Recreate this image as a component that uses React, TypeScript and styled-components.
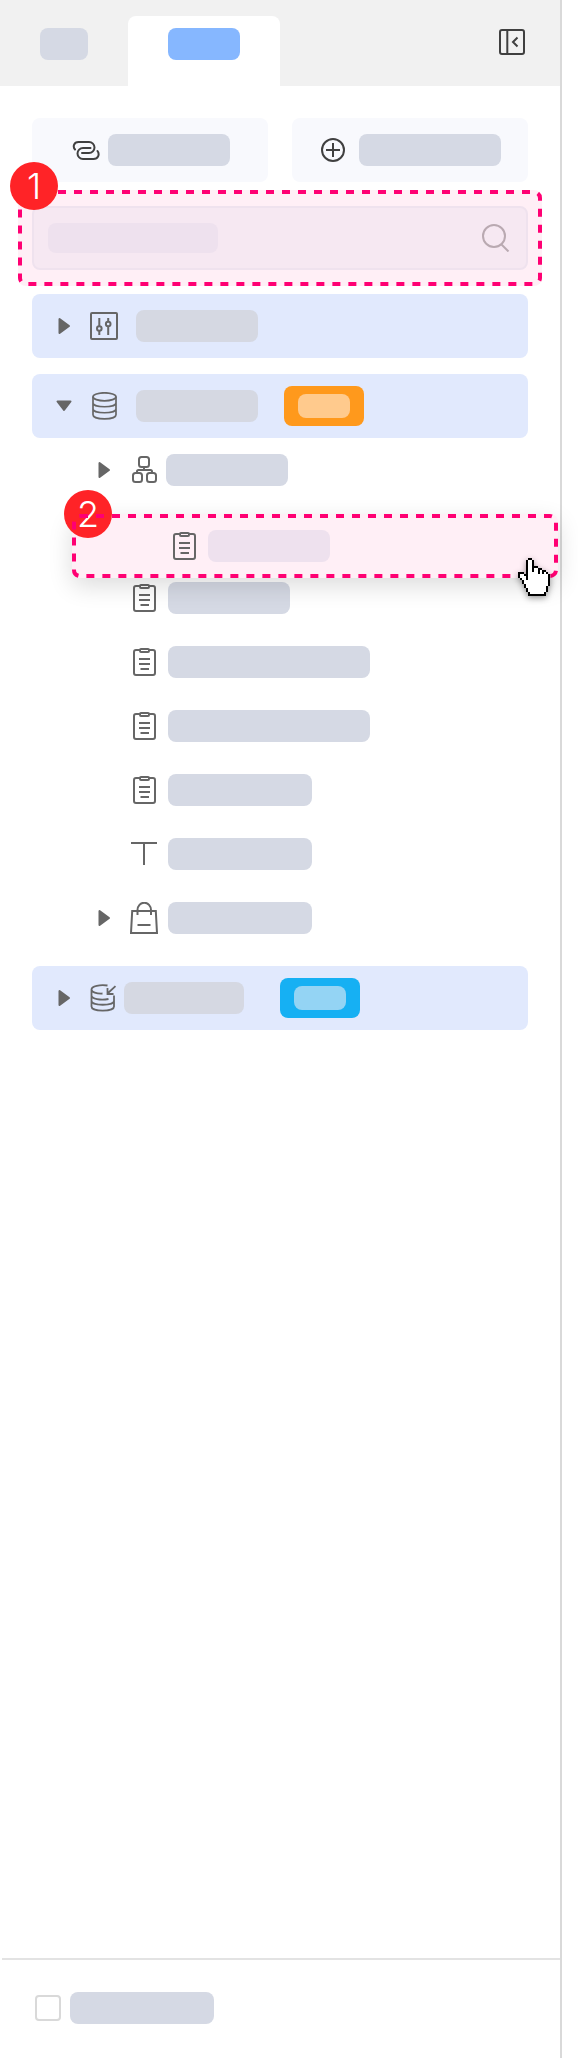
import React from 'react';
import styled, { createGlobalStyle, css } from 'styled-components';

const color = {
  ink: '#404040',
  icon: '#666666',
  skeleton: '#d5d9e4',
  skeletonPink: '#eee1ee',
  pink: '#ff0073',
  pinkFill: '#ffeff6',
  row: '#e1e9fd',
};

const GlobalStyle = createGlobalStyle`
  *, *::before, *::after { box-sizing: border-box; }
  body { margin: 0; background: #fff; font-family: Inter, 'Liberation Sans', sans-serif; }
  button { border: 0; padding: 0; margin: 0; background: none; font: inherit; cursor: pointer; }
  ul { list-style: none; margin: 0; padding: 0; }
`;

const Page = styled.div`
  min-height: 100vh;
  display: flex;
  padding-right: 16px;
`;

const Panel = styled.aside`
  flex: 1;
  min-width: 0;
  display: flex;
  flex-direction: column;
  border-right: 2px solid #d9d9d9;
`;

const Header = styled.header`
  height: 86px;
  display: flex;
  align-items: stretch;
  justify-content: space-between;
  padding: 16px 32px 0 0;
  background: #f1f1f1;
`;

const Tabs = styled.div`
  display: flex;
`;

const Tab = styled.button<{ $active?: boolean }>`
  display: flex;
  align-items: flex-start;
  padding: 12px 40px 0;
  border-radius: 8px 8px 0 0;
  background: ${(p) => (p.$active ? '#fff' : 'transparent')};
`;

const Skeleton = styled.span<{ $w: number; $h?: number; $color?: string }>`
  display: block;
  flex: none;
  width: ${(p) => p.$w}px;
  height: ${(p) => p.$h ?? 32}px;
  border-radius: 8px;
  background: ${(p) => p.$color ?? color.skeleton};
`;

const CollapseButton = styled.button`
  align-self: flex-start;
  display: flex;
  padding: 12px 2px;
`;

const Content = styled.main`
  flex: 1;
  padding: 32px 32px 16px;
`;

const Actions = styled.div`
  display: grid;
  grid-template-columns: 1fr 1fr;
  gap: 24px;
`;

const ActionButton = styled.button<{ $gap: number }>`
  height: 64px;
  display: flex;
  align-items: center;
  justify-content: center;
  gap: ${(p) => p.$gap}px;
  padding-left: 2px;
  border-radius: 8px;
  background: #f8f9fd;
`;

const calloutFrame = css`
  border-radius: 8px;
  background: ${color.pinkFill};
`;

const SearchCallout = styled.div`
  ${calloutFrame}
  position: relative;
  margin: 8px -14px;
  padding: 16px 14px;
`;

const SearchBox = styled.label`
  height: 64px;
  display: flex;
  align-items: center;
  padding: 0 16px 0 14px;
  border: 2px solid #efe2ee;
  border-radius: 8px;
  background: #f6e8f2;
`;

const SearchInput = styled.input`
  flex: 1;
  min-width: 0;
  height: 100%;
  padding: 0 8px;
  border: 0;
  outline: 0;
  background: transparent;
  font: inherit;
`;

const DashSvg = styled.svg`
  position: absolute;
  inset: 0;
  width: 100%;
  height: 100%;
  pointer-events: none;

  rect {
    x: 2px;
    y: 2px;
    width: calc(100% - 4px);
    height: calc(100% - 4px);
  }
`;

const Marker = styled.span`
  position: absolute;
  top: -28px;
  left: -8px;
  width: 48px;
  height: 48px;
  border-radius: 50%;
  background: #ff2327;
  color: #fff;
  font-size: 36px;
  font-weight: 300;
  line-height: 48px;
  text-align: center;
`;

const Tree = styled.ul`
  display: flex;
  flex-direction: column;
  gap: 16px;
`;

const GroupRow = styled.div`
  height: 64px;
  display: flex;
  align-items: center;
  padding-left: 24px;
  border-radius: 8px;
  background: ${color.row};
`;

const ChildRow = styled.li`
  height: 64px;
  display: flex;
  align-items: center;
  padding-left: 64px;
`;

const Toggle = styled.button`
  flex: none;
  width: 16px;
  height: 24px;
  display: flex;
  align-items: center;
  justify-content: center;
`;

const ToggleSpace = styled.span`
  flex: none;
  width: 16px;
`;

const IconSlot = styled.span<{ $gap: number }>`
  flex: none;
  width: 28px;
  display: flex;
  align-items: center;
  justify-content: center;
  margin: 0 ${(p) => p.$gap}px 0 18px;
`;

const Tag = styled.span<{ $color: string; $gap: number }>`
  flex: none;
  width: 80px;
  height: 40px;
  display: flex;
  align-items: center;
  justify-content: center;
  margin-left: ${(p) => p.$gap}px;
  border-radius: 8px;
  background: ${(p) => p.$color};
`;

const DropSlot = styled.li`
  position: relative;
  height: 64px;
`;

const DraggedItem = styled.div`
  ${calloutFrame}
  position: absolute;
  z-index: 1;
  top: 12px;
  left: 40px;
  right: -30px;
  height: 64px;
  display: flex;
  align-items: center;
  padding-left: 80px;
  box-shadow: 0 8px 24px rgba(0, 0, 0, 0.14);
`;

const DragMarker = styled(Marker)`
  top: -24px;
`;

const CursorIcon = styled.svg`
  position: absolute;
  right: 8px;
  top: 44px;
  filter: drop-shadow(0 2px 3px rgba(0, 0, 0, 0.4));
`;

const Footer = styled.footer`
  height: 100px;
  display: flex;
  align-items: center;
  margin-left: 2px;
  padding: 0 32px 2px;
  border-top: 2px solid #e3e3e3;
`;

const CheckLabel = styled.label`
  display: flex;
  align-items: center;
  gap: 9px;
`;

const Checkbox = styled.input`
  appearance: none;
  width: 26px;
  height: 26px;
  margin: 0 0 0 1px;
  border: 2px solid #d9d9d9;
  border-radius: 4px;
  background: #fff;

  &:checked {
    background: #86b7ff;
  }
`;

const Dashes = () => (
  <DashSvg aria-hidden="true">
    <rect rx="6" fill="none" stroke={color.pink} strokeWidth="4" strokeDasharray="8 8" />
  </DashSvg>
);

const svgProps = {
  width: 28,
  height: 28,
  viewBox: '0 0 28 28',
  fill: 'none',
  stroke: color.icon,
  strokeWidth: 2,
  'aria-hidden': true,
} as const;

const CollapseIcon = () => (
  <svg {...svgProps} stroke={color.ink}>
    <rect x="2" y="2" width="24" height="24" rx="2" />
    <path d="M9.300 2v24M19.500 9.500 15 14l4.500 4.500" />
  </svg>
);

const LinkIcon = () => (
  <svg {...svgProps} stroke={color.ink} strokeLinecap="round">
    <path d="M3 13.500C.500 10.500 2 6 6.500 6H17a5.500 5.500 0 0 1 0 11H10" />
    <path d="M18.500 12H11a5.500 5.500 0 0 0 0 11h10.500c4.500 0 6.500-4.500 4-8" />
  </svg>
);

const PlusIcon = () => (
  <svg {...svgProps} width={24} height={24} viewBox="0 0 24 24" stroke={color.ink}>
    <circle cx="12" cy="12" r="11" />
    <path d="M12 5v14M5 12h14" />
  </svg>
);

const SearchIcon = () => (
  <svg {...svgProps} stroke="#b9a9b1">
    <circle cx="12" cy="12" r="11" />
    <path d="m19.500 20.500 7 7" />
  </svg>
);

const Triangle = ({ open }: { open?: boolean }) => (
  <svg width="16" height="18" viewBox="0 0 16 18" fill={color.icon} stroke={color.icon} strokeWidth="2" strokeLinejoin="round" aria-hidden="true">
    <path d={open ? 'M1.500 4.500h13L8 13z' : 'M3.500 2v14L13 9z'} />
  </svg>
);

const SlidersIcon = () => (
  <svg {...svgProps}>
    <rect x="1" y="1" width="26" height="26" rx="1" />
    <path d="M9.300 6v8M9.300 19v4M18.200 6v3.500M18.200 14v9" />
    <circle cx="9.300" cy="16.500" r="2.300" />
    <circle cx="18.200" cy="12" r="2.300" />
  </svg>
);

const DatabaseIcon = () => (
  <svg {...svgProps} strokeWidth={1.7}>
    <ellipse cx="14.500" cy="4.800" rx="11.500" ry="4" />
    <path d="M3 4.800v18c0 5.500 23 5.500 23 0v-18M3 11c0 5 23 5 23 0M3 17c0 5 23 5 23 0" />
  </svg>
);

const DatabaseImportIcon = () => (
  <svg {...svgProps} strokeWidth={1.8}>
    <path d="M17.500 1.500C10 .500 1.500 2 1.500 5.500v17c0 5.500 22.500 5.500 22.500 0V11.500M1.500 5.500c0 2.500 5 4.300 11 4M1.500 11.500c0 3.500 9 5 17 3.500M1.500 17c0 5 22.500 5 22.500 0" />
    <path d="M25.500 2.200 17.500 9.500M17.500 4v6h6" />
  </svg>
);

const StructureIcon = () => (
  <svg {...svgProps}>
    <rect x="9" y="1" width="10" height="10" rx="2.500" />
    <rect x="3" y="17" width="9" height="9" rx="2.500" />
    <rect x="17" y="17" width="9" height="9" rx="2.500" />
    <path d="M14 11v3M7 17v-1.500c0-1 .500-1.500 1.500-1.500h12c1 0 1.500.500 1.500 1.500V17" />
  </svg>
);

const ClipboardIcon = () => (
  <svg {...svgProps}>
    <path d="M10 2H6a2 2 0 0 0-2 2v21a2 2 0 0 0 2 2h17a2 2 0 0 0 2-2V4a2 2 0 0 0-2-2h-4" />
    <rect x="10" y="1" width="9" height="3" rx="1" />
    <path d="M9 11h11M9 16h11M10.500 21h8.500" />
  </svg>
);

const TextIcon = () => (
  <svg {...svgProps}>
    <path d="M1 3h26M14 3v22" />
  </svg>
);

const BagIcon = () => (
  <svg {...svgProps} height={32} viewBox="0 0 28 32">
    <path d="M2.200 9h23.600L27 31H1zM7.500 13V8a6.500 7 0 0 1 13.500 0v5M7.500 23h13" />
  </svg>
);

/* Hand pointer on a 16 x 19 grid, two pixels to a cell. */
const HandCursor = () => (
  <CursorIcon width="32" height="38" viewBox="0 0 16 19" shapeRendering="crispEdges" aria-hidden="true">
    <path
      fill="#000"
      d="M5 0h2v1h1v3h2v1h2v1h2v1h1v1h1v6h-1v3h-1v2H5v-2H4v-2H3v-2H2v-2H1v-1H0V7h3v1h1V1h1z"
    />
    <path
      fill="#fff"
      d="M5 1h2v6h1V5h2v3h1V6h1v2h1V7h1v1h1v6h-1v3h-1v1H6v-1H5v-2H4v-2H3v-2H2v-1H1V8h2v1h1v2h1z"
    />
  </CursorIcon>
);

const leaves = [
  { id: 'a', width: 122, Icon: ClipboardIcon },
  { id: 'b', width: 202, Icon: ClipboardIcon },
  { id: 'c', width: 202, Icon: ClipboardIcon },
  { id: 'd', width: 144, Icon: ClipboardIcon },
  { id: 'e', width: 144, Icon: TextIcon },
  { id: 'f', width: 144, Icon: BagIcon, branch: true },
];

const groupSkeleton = '#d5d8e2';

export default function App() {
  return (
    <>
      <GlobalStyle />
      <Page>
        <Panel>
          <Header>
            <Tabs role="tablist">
              <Tab role="tab" aria-selected="false" aria-label="First tab">
                <Skeleton $w={48} />
              </Tab>
              <Tab role="tab" aria-selected="true" aria-label="Second tab" $active>
                <Skeleton $w={72} $color="#86b7ff" />
              </Tab>
            </Tabs>
            <CollapseButton aria-label="Collapse panel">
              <CollapseIcon />
            </CollapseButton>
          </Header>

          <Content>
            <Actions>
              <ActionButton aria-label="Link" $gap={8}>
                <LinkIcon />
                <Skeleton $w={122} />
              </ActionButton>
              <ActionButton aria-label="Add" $gap={14}>
                <PlusIcon />
                <Skeleton $w={142} />
              </ActionButton>
            </Actions>

            <SearchCallout>
              <SearchBox>
                <Skeleton $w={170} $h={30} $color={color.skeletonPink} />
                <SearchInput type="search" aria-label="Search" />
                <SearchIcon />
              </SearchBox>
              <Dashes />
              <Marker>1</Marker>
            </SearchCallout>

            <Tree>
              <li>
                <GroupRow>
                  <Toggle aria-label="Expand" aria-expanded="false"><Triangle /></Toggle>
                  <IconSlot $gap={18}><SlidersIcon /></IconSlot>
                  <Skeleton $w={122} $color={groupSkeleton} />
                </GroupRow>
              </li>
              <li>
                <GroupRow>
                  <Toggle aria-label="Collapse" aria-expanded="true"><Triangle open /></Toggle>
                  <IconSlot $gap={18}><DatabaseIcon /></IconSlot>
                  <Skeleton $w={122} $color={groupSkeleton} />
                  <Tag $color="#ff991c" $gap={26}>
                    <Skeleton $w={52} $h={24} $color="#ffca8d" />
                  </Tag>
                </GroupRow>
                <ul>
                  <ChildRow>
                    <Toggle aria-label="Expand" aria-expanded="false"><Triangle /></Toggle>
                    <IconSlot $gap={8}><StructureIcon /></IconSlot>
                    <Skeleton $w={122} />
                  </ChildRow>
                  <DropSlot>
                    <DraggedItem>
                      <DragMarker>2</DragMarker>
                      <IconSlot $gap={10}><ClipboardIcon /></IconSlot>
                      <Skeleton $w={122} $color={color.skeletonPink} />
                      <Dashes />
                      <HandCursor />
                    </DraggedItem>
                  </DropSlot>
                  {leaves.map(({ id, width, Icon, branch }) => (
                    <ChildRow key={id}>
                      {branch ? (
                        <Toggle aria-label="Expand" aria-expanded="false"><Triangle /></Toggle>
                      ) : (
                        <ToggleSpace />
                      )}
                      <IconSlot $gap={10}><Icon /></IconSlot>
                      <Skeleton $w={width} />
                    </ChildRow>
                  ))}
                </ul>
              </li>
              <li>
                <GroupRow>
                  <Toggle aria-label="Expand" aria-expanded="false"><Triangle /></Toggle>
                  <IconSlot $gap={6}><DatabaseImportIcon /></IconSlot>
                  <Skeleton $w={120} $color={groupSkeleton} />
                  <Tag $color="#16b0f3" $gap={36}>
                    <Skeleton $w={52} $h={24} $color="#94d4f4" />
                  </Tag>
                </GroupRow>
              </li>
            </Tree>
          </Content>

          <Footer>
            <CheckLabel>
              <Checkbox type="checkbox" aria-label="Option" />
              <Skeleton $w={144} />
            </CheckLabel>
          </Footer>
        </Panel>
      </Page>
    </>
  );
}
